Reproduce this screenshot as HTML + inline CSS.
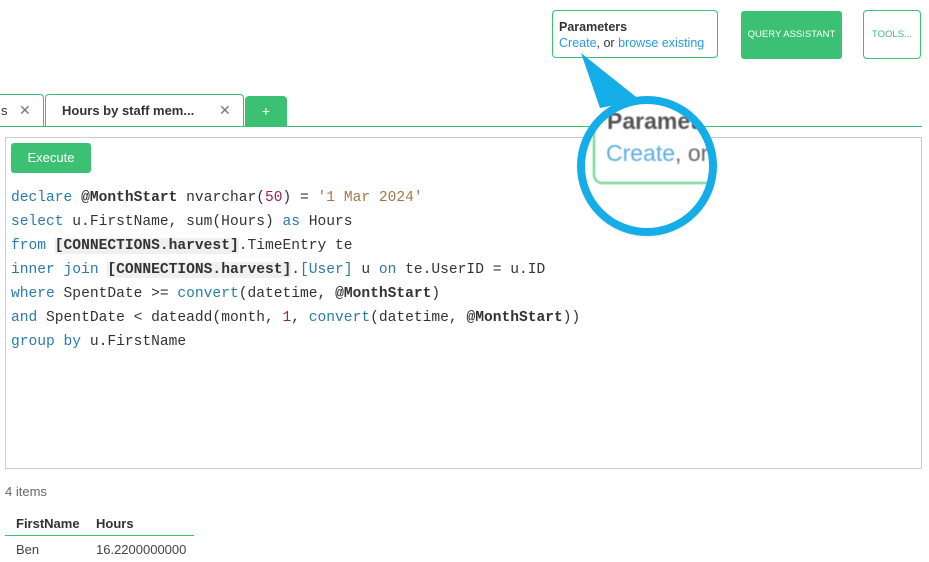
<!DOCTYPE html>
<html><head><meta charset="utf-8"><style>
body{margin:0;width:929px;height:562px;background:#fff;font-family:"Liberation Sans",sans-serif;position:relative;overflow:hidden;color:#333}
.abs{position:absolute}
.param{left:552px;top:10px;width:166px;height:48px;border:1px solid #3cc074;border-radius:4px;box-sizing:border-box;padding:8px 0 0 6px;font-size:12.5px;line-height:16px}
.param b{color:#333}
.param a{color:#2a9ad8;text-decoration:none}
.qa{left:741px;top:11px;width:101px;height:48px;background:#3cc074;border-radius:3px;color:#fff;font-size:9.5px;text-align:center;line-height:48px}
.tools{left:863px;top:10px;width:58px;height:49px;border:1px solid #3cc074;border-radius:4px;box-sizing:border-box;color:#3cc074;font-size:9.5px;text-align:center;line-height:47px}
.tab{top:94px;height:32px;border:1px solid #3cc074;border-bottom:none;border-radius:4px 4px 0 0;box-sizing:border-box;background:#fff;font-size:13px}
.line{left:0;top:126px;width:922px;height:1px;background:#3cc074}
.editor{left:5px;top:137px;width:917px;height:332px;border:1px solid #ccc;box-sizing:border-box}
.exec{left:11px;top:143px;width:80px;height:30px;background:#3cc074;border-radius:3px;color:#fff;font-size:13px;text-align:center;line-height:30px}
pre{position:absolute;left:11px;top:186px;margin:0;font-family:"Liberation Mono",monospace;font-size:14.6px;line-height:24px;color:#333}
.k{color:#2a7ab0}.n{color:#a0205a}.s{color:#a8764a}.v{font-weight:bold}.c{background:#f0f0f0;font-weight:bold}
</style></head><body>
<div class="abs param"><b>Parameters</b><br><a>Create</a>, or <a>browse existing</a></div>
<div class="abs qa">QUERY ASSISTANT</div>
<div class="abs tools">TOOLS...</div>

<div class="abs tab" style="left:-10px;width:54px;"><span class="abs" style="left:10px;top:8px">s</span><span class="abs" style="left:28px;top:7px;color:#777;font-size:14px">✕</span></div>
<div class="abs tab" style="left:45px;width:199px;"><b class="abs" style="left:16px;top:8px;color:#333">Hours by staff mem...</b><span class="abs" style="left:173px;top:7px;color:#777;font-size:14px">✕</span></div>
<div class="abs" style="left:245px;top:96px;width:42px;height:30px;background:#3cc074;border-radius:4px 4px 0 0;color:#fff;text-align:center;line-height:30px;font-size:14px">+</div>
<div class="abs line"></div>

<div class="abs editor"></div>
<div class="abs exec">Execute</div>
<pre><span class="k">declare</span> <span class="v">@MonthStart</span> nvarchar(<span class="n">50</span>) = <span class="s">'1 Mar 2024'</span>
<span class="k">select</span> u.FirstName, sum(Hours) <span class="k">as</span> Hours
<span class="k">from</span> <span class="c">[CONNECTIONS.harvest]</span>.TimeEntry te
<span class="k">inner join</span> <span class="c">[CONNECTIONS.harvest]</span>.<span class="k">[User]</span> u <span class="k">on</span> te.UserID = u.ID
<span class="k">where</span> SpentDate &gt;= <span class="k">convert</span>(datetime, <span class="v">@MonthStart</span>)
<span class="k">and</span> SpentDate &lt; dateadd(month, <span class="n">1</span>, <span class="k">convert</span>(datetime, <span class="v">@MonthStart</span>))
<span class="k">group by</span> u.FirstName</pre>

<div class="abs" style="left:5px;top:484px;font-size:13px;color:#666">4 items</div>
<div class="abs" style="left:16px;top:516px;font-size:13px;font-weight:bold">FirstName</div>
<div class="abs" style="left:96px;top:516px;font-size:13px;font-weight:bold">Hours</div>
<div class="abs" style="left:5px;top:535px;width:189px;height:1px;background:#3cc074"></div>
<div class="abs" style="left:16px;top:542px;font-size:13px;color:#444">Ben</div>
<div class="abs" style="left:96px;top:542px;font-size:13px;color:#444">16.2200000000</div>

<svg class="abs" style="left:0;top:0" width="929" height="562">
<defs><clipPath id="cp"><circle cx="647" cy="166" r="64"/></clipPath>
<filter id="sh"><feDropShadow dx="0" dy="2" stdDeviation="3" flood-opacity="0.3"/></filter>
<filter id="bl"><feGaussianBlur stdDeviation="0.6"/></filter></defs>
<polygon points="581,53 600,108 640,100" fill="#14ade8"/>
<circle cx="647" cy="166" r="66" fill="#fff" filter="url(#sh)"/>
<g clip-path="url(#cp)" filter="url(#bl)">
<rect x="594" y="92" width="200" height="91" rx="8" fill="none" stroke="#7ed99a" stroke-width="2.5"/>
<text x="607" y="129" font-family="Liberation Sans,sans-serif" font-size="23" font-weight="bold" fill="#555">Parameters</text>
<text x="606" y="161" font-family="Liberation Sans,sans-serif" font-size="23" fill="#5aaee0">Create<tspan fill="#666">, or</tspan></text>
</g>
<circle cx="647" cy="166" r="66" fill="none" stroke="#14ade8" stroke-width="8"/>
</svg>
</body></html>
